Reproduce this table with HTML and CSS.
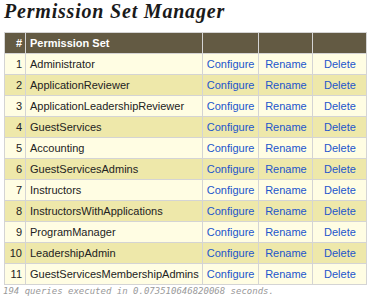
FILE: index.html
```html
<!DOCTYPE html>
<html lang="en">
<head>
    <meta charset="UTF-8">
    <meta name="viewport" content="width=device-width, initial-scale=1.0">
    <title>Permission Set Manager</title>
    <link rel="stylesheet" href="styles.css">
</head>
<body>
    <h1>Permission Set Manager</h1>

    <table class="sets">
        <thead>
            <tr>
                <th class="num">#</th>
                <th class="name">Permission Set</th>
                <th class="act configure"></th>
                <th class="act rename"></th>
                <th class="act delete"></th>
            </tr>
        </thead>
        <tbody>
            <tr><td class="num">1</td><td class="name">Administrator</td><td class="act"><a href="#">Configure</a></td><td class="act"><a href="#">Rename</a></td><td class="act"><a href="#">Delete</a></td></tr>
            <tr><td class="num">2</td><td class="name">ApplicationReviewer</td><td class="act"><a href="#">Configure</a></td><td class="act"><a href="#">Rename</a></td><td class="act"><a href="#">Delete</a></td></tr>
            <tr><td class="num">3</td><td class="name">ApplicationLeadershipReviewer</td><td class="act"><a href="#">Configure</a></td><td class="act"><a href="#">Rename</a></td><td class="act"><a href="#">Delete</a></td></tr>
            <tr><td class="num">4</td><td class="name">GuestServices</td><td class="act"><a href="#">Configure</a></td><td class="act"><a href="#">Rename</a></td><td class="act"><a href="#">Delete</a></td></tr>
            <tr><td class="num">5</td><td class="name">Accounting</td><td class="act"><a href="#">Configure</a></td><td class="act"><a href="#">Rename</a></td><td class="act"><a href="#">Delete</a></td></tr>
            <tr><td class="num">6</td><td class="name">GuestServicesAdmins</td><td class="act"><a href="#">Configure</a></td><td class="act"><a href="#">Rename</a></td><td class="act"><a href="#">Delete</a></td></tr>
            <tr><td class="num">7</td><td class="name">Instructors</td><td class="act"><a href="#">Configure</a></td><td class="act"><a href="#">Rename</a></td><td class="act"><a href="#">Delete</a></td></tr>
            <tr><td class="num">8</td><td class="name">InstructorsWithApplications</td><td class="act"><a href="#">Configure</a></td><td class="act"><a href="#">Rename</a></td><td class="act"><a href="#">Delete</a></td></tr>
            <tr><td class="num">9</td><td class="name">ProgramManager</td><td class="act"><a href="#">Configure</a></td><td class="act"><a href="#">Rename</a></td><td class="act"><a href="#">Delete</a></td></tr>
            <tr><td class="num">10</td><td class="name">LeadershipAdmin</td><td class="act"><a href="#">Configure</a></td><td class="act"><a href="#">Rename</a></td><td class="act"><a href="#">Delete</a></td></tr>
            <tr><td class="num">11</td><td class="name">GuestServicesMembershipAdmins</td><td class="act"><a href="#">Configure</a></td><td class="act"><a href="#">Rename</a></td><td class="act"><a href="#">Delete</a></td></tr>
        </tbody>
    </table>

    <p class="timing">194 queries executed in 0.073510646820068 seconds.</p>
</body>
</html>
```

FILE: styles.css
```css
body {
    margin: 0;
    padding: 0 4px;
    font-family: "Liberation Sans", Arial, sans-serif;
    font-size: 11px;
    color: #222;
    background: white;
}

h1 {
    margin: 0;
    padding-top: 1px;
    font-family: "Liberation Serif", "Times New Roman", serif;
    font-size: 20px;
    line-height: 20px;
    font-style: italic;
    font-weight: bold;
    letter-spacing: 0.8px;
    color: #1a1a1a;
}

.sets {
    margin-top: 11px;
    border-collapse: collapse;
    border: 1px solid #d4d4d4;
}

.sets th,
.sets td {
    border: 1px solid #d4d4d4;
    height: 20px;
    padding: 0 4px;
    white-space: nowrap;
}

.sets th {
    background: #635a43;
    color: white;
    font-weight: bold;
    text-align: left;
}

.sets th.num,
.sets td.num {
    text-align: right;
    padding: 0 3px;
    width: 14px;
}

.sets th.name,
.sets td.name {
    padding: 0 3px 0 4px;
}

.sets th.configure {
    width: 46px;
}

.sets th.rename,
.sets th.delete {
    width: 45px;
}

.sets tbody tr:nth-child(odd) {
    background: #fffde3;
}

.sets tbody tr:nth-child(even) {
    background: #eee8aa;
}

.sets td.act {
    text-align: center;
}

.sets a {
    color: #2255cc;
    text-decoration: none;
}

.timing {
    margin: 1px 0 0 -1px;
    font-family: "DejaVu Sans Mono", monospace;
    font-size: 9px;
    font-style: italic;
    color: #999;
}
```
